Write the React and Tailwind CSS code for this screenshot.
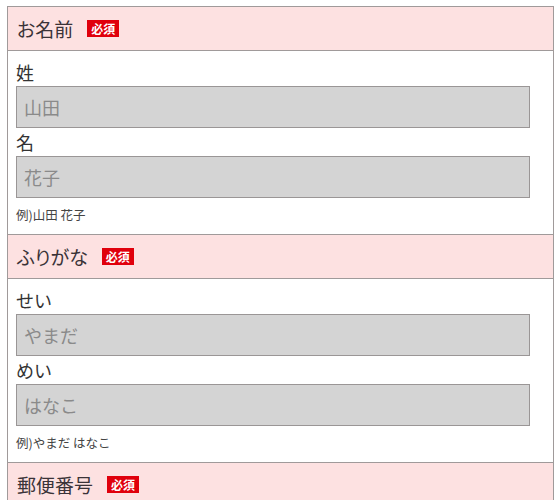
import React from 'react';

const font = { fontFamily: '"Noto Sans CJK JP", "Noto Sans", sans-serif' };

const sections = [
  {
    title: 'お名前',
    fields: [
      { label: '姓', placeholder: '山田' },
      { label: '名', placeholder: '花子' },
    ],
    note: '例)山田 花子',
  },
  {
    title: 'ふりがな',
    fields: [
      { label: 'せい', placeholder: 'やまだ' },
      { label: 'めい', placeholder: 'はなこ' },
    ],
    note: '例)やまだ はなこ',
  },
  {
    title: '郵便番号',
    fields: [{ label: '〒', placeholder: '123-4567' }],
    note: '例)123-4567',
  },
];

const Badge = () => (
  <span className="ml-[14px] inline-flex h-[17px] w-[32px] items-center justify-center bg-[#e0000c] text-[12px] font-bold leading-none text-white">
    必須
  </span>
);

const Section = ({ title, fields, note }) => (
  <div>
    {/* Heading */}
    <div className="flex h-[44px] items-center border-b border-[#a09a9a] bg-[#fde1e1] pl-[9px]">
      <span className="text-[19px] leading-none text-[#3a3338] [font-feature-settings:'palt']">{title}</span>
      <Badge />
    </div>

    {/* Fields */}
    <div className="border-b border-[#a09a9a] pl-[8px] pt-[7px]">
      {fields.map((f) => (
        <div key={f.label}>
          <div className="h-[28px] text-[18px] leading-[28px] text-[#333]">{f.label}</div>
          <input
            type="text"
            placeholder={f.placeholder}
            className="block h-[42px] w-[514px] border border-[#9a9696] bg-[#d4d4d4] px-[7px] text-[18px] text-[#333] outline-none placeholder:text-[#8a8a8a]"
          />
        </div>
      ))}
      <p className="mt-[8px] pb-[10px] text-[12.5px] leading-[18px] text-[#444]">{note}</p>
    </div>
  </div>
);

export default function App() {
  return (
    <div className="min-h-screen bg-white pl-[7px] pt-[6px]" style={font}>
      <div className="w-[547px] border-x border-t border-[#a09a9a]">
        {sections.map((s) => (
          <Section key={s.title} {...s} />
        ))}
      </div>
    </div>
  );
}
